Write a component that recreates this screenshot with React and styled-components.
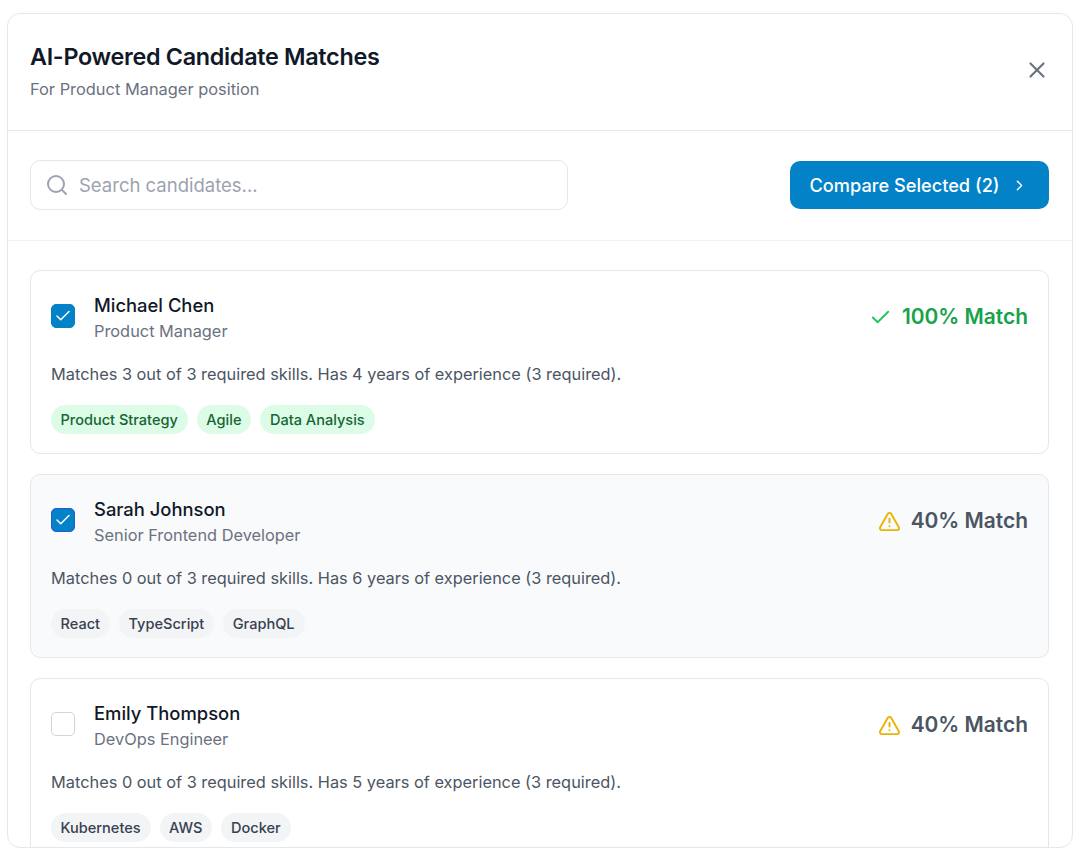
import React from "react"
import styled, { createGlobalStyle, css } from "styled-components"
import { AlertTriangle, Check, ChevronRight, Search, X } from "lucide-react"

const GlobalStyle = createGlobalStyle`
  html, body {
    margin: 0;
    padding: 0;
    background: #fff;
    font-family: Inter, "Liberation Sans", sans-serif;
  }
`

const Page = styled.div`
  box-sizing: border-box;
  height: 857px;
  padding: 13px 2px 9px 7px;
`

const Panel = styled.div`
  box-sizing: border-box;
  height: 835px;
  border: 1px solid #e5e7eb;
  border-radius: 13px;
  overflow: hidden;
  background: #fff;
`

const Header = styled.header`
  box-sizing: border-box;
  height: 117px;
  padding: 0 22px 3px 22px;
  display: flex;
  align-items: center;
  justify-content: space-between;
  border-bottom: 1px solid #e5e7eb;
`

const Title = styled.h1`
  margin: 0;
  font-size: 23.35px;
  line-height: 32px;
  font-weight: 600;
  letter-spacing: -0.3px;
  color: #111827;
`

const Subtitle = styled.p`
  margin: 4px 0 0;
  font-size: 16.4px;
  line-height: 24px;
  color: #6b7280;
`

const CloseButton = styled.button`
  display: flex;
  padding: 0 0 2px;
  border: 0;
  background: none;
  color: #6b7280;
`

const Toolbar = styled.div`
  box-sizing: border-box;
  height: 110px;
  padding: 0 23px 2px 22px;
  display: flex;
  align-items: center;
  justify-content: space-between;
  border-bottom: 1px solid #f0f1f3;
`

const SearchBox = styled.label`
  box-sizing: border-box;
  width: 538px;
  height: 50px;
  padding: 0 14px;
  display: flex;
  align-items: center;
  gap: 10px;
  border: 1px solid #e5e7eb;
  border-radius: 10px;
  color: #9ca3af;
`

const SearchInput = styled.input`
  flex: 1;
  min-width: 0;
  padding: 1px 0 0;
  border: 0;
  outline: 0;
  background: none;
  font: inherit;
  font-size: 18.5px;
  color: #111827;

  &::placeholder {
    color: #9ca3af;
    opacity: 1;
  }
`

const CompareButton = styled.button`
  box-sizing: border-box;
  width: 259px;
  height: 48px;
  padding: 1px 0 0 19.5px;
  display: flex;
  align-items: center;
  gap: 11px;
  border: 0;
  border-radius: 10px;
  background: #0382c8;
  color: #fff;
  font: inherit;
  font-size: 18.2px;
  font-weight: 500;
`

const List = styled.div`
  padding: 28.5px 23px 0 22px;
  display: flex;
  flex-direction: column;
  gap: 20px;
`

const Card = styled.article`
  box-sizing: border-box;
  flex: none;
  height: 184px;
  padding: 21.5px 20px 0;
  border: 1px solid #e5e7eb;
  border-radius: 10px;
  background: ${(p) => (p.$shaded ? "#f9fafb" : "#fff")};
`

const CardTop = styled.div`
  display: flex;
  align-items: flex-start;
  justify-content: space-between;
`

const Person = styled.div`
  display: flex;
  align-items: flex-start;
  gap: 19px;
`

const Checkbox = styled.span`
  box-sizing: border-box;
  width: 24px;
  height: 24px;
  margin-top: 12px;
  display: flex;
  align-items: center;
  justify-content: center;
  border-radius: 5px;
  color: #fff;
  ${(p) =>
    p.$checked
      ? css`
          background: #0382c8;
          border: ${p.$focused ? "1.5px solid #1d5fd1" : "1px solid #0382c8"};
        `
      : css`
          background: #fff;
          border: 1px solid #d1d5db;
        `}
`

const Name = styled.div`
  font-size: 18.4px;
  line-height: 26px;
  font-weight: 500;
  color: #111827;
`

const Role = styled.div`
  font-size: 16.35px;
  line-height: 26px;
  color: #6b7280;
`

const Score = styled.div`
  margin-top: 12px;
  display: flex;
  align-items: center;
  gap: 10px;
  font-size: 20.9px;
  line-height: 26px;
  font-weight: 600;
  color: ${(p) => (p.$full ? "#16a34a" : "#4b5563")};
`

const Summary = styled.p`
  margin: 18px 0 0;
  font-size: 16.35px;
  line-height: 24px;
  color: #4b5563;
`

const Tags = styled.div`
  margin-top: 19px;
  display: flex;
  gap: 9px;
`

const Tag = styled.span`
  height: 29px;
  padding: 0 10px 0 9.5px;
  display: flex;
  align-items: center;
  border-radius: 15px;
  font-size: 14.55px;
  font-weight: 500;
  background: ${(p) => (p.$matched ? "#dcfce7" : "#f3f4f6")};
  color: ${(p) => (p.$matched ? "#166534" : "#374151")};
`

const candidates = [
  {
    name: "Michael Chen",
    role: "Product Manager",
    score: 100,
    summary: "Matches 3 out of 3 required skills. Has 4 years of experience (3 required).",
    tags: ["Product Strategy", "Agile", "Data Analysis"],
    checked: true,
  },
  {
    name: "Sarah Johnson",
    role: "Senior Frontend Developer",
    score: 40,
    summary: "Matches 0 out of 3 required skills. Has 6 years of experience (3 required).",
    tags: ["React", "TypeScript", "GraphQL"],
    checked: true,
    focused: true,
    shaded: true,
  },
  {
    name: "Emily Thompson",
    role: "DevOps Engineer",
    score: 40,
    summary: "Matches 0 out of 3 required skills. Has 5 years of experience (3 required).",
    tags: ["Kubernetes", "AWS", "Docker"],
  },
]

function CandidateCard({ candidate }) {
  const full = candidate.score === 100
  return (
    <Card $shaded={candidate.shaded}>
      <CardTop>
        <Person>
          <Checkbox $checked={candidate.checked} $focused={candidate.focused}>
            {candidate.checked && <Check size={18} strokeWidth={2} />}
          </Checkbox>
          <div>
            <Name>{candidate.name}</Name>
            <Role>{candidate.role}</Role>
          </div>
        </Person>
        <Score $full={full}>
          {full ? (
            <Check size={23} strokeWidth={2} color="#22c55e" />
          ) : (
            <AlertTriangle size={23} strokeWidth={2} color="#eab308" />
          )}
          {candidate.score}% Match
        </Score>
      </CardTop>
      <Summary>{candidate.summary}</Summary>
      <Tags>
        {candidate.tags.map((tag) => (
          <Tag key={tag} $matched={full}>{tag}</Tag>
        ))}
      </Tags>
    </Card>
  )
}

export default function App() {
  return (
    <Page>
      <GlobalStyle />
      <Panel>
        <Header>
          <div>
            <Title>AI-Powered Candidate Matches</Title>
            <Subtitle>For Product Manager position</Subtitle>
          </div>
          <CloseButton aria-label="Close">
            <X size={26} strokeWidth={2} />
          </CloseButton>
        </Header>
        <Toolbar>
          <SearchBox>
            <Search size={24} strokeWidth={2} />
            <SearchInput placeholder="Search candidates..." />
          </SearchBox>
          <CompareButton>
            Compare Selected (2)
            <ChevronRight size={17} strokeWidth={2} />
          </CompareButton>
        </Toolbar>
        <List>
          {candidates.map((c) => (
            <CandidateCard key={c.name} candidate={c} />
          ))}
        </List>
      </Panel>
    </Page>
  )
}
